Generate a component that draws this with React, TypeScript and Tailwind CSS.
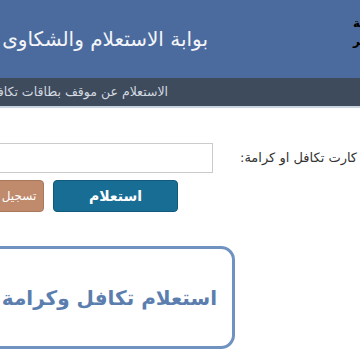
import React from 'react';

const App: React.FC = () => {
  return (
    <div
      dir="rtl"
      className="w-[360px] h-[360px] overflow-hidden bg-white"
      style={{ fontFamily: '"DejaVu Sans", "Noto Sans", sans-serif' }}
    >
      {/* Header */}
      <div className="h-[78px] bg-[#4b6b9e] flex items-center">
        <div className="w-[60px] shrink-0 -mr-[53px] self-start pt-[14px] text-left text-[12px] font-bold text-black leading-[18px]">
          <div className="whitespace-nowrap">الاجتماعية</div>
          <div className="whitespace-nowrap">مصر</div>
        </div>
        <span className="mr-[145px] shrink-0 whitespace-nowrap text-[20px] text-[#f3f5f9]">
          بوابة الاستعلام والشكاوى لبرنامج تكافل وكرامة
        </span>
      </div>

      {/* Sub bar */}
      <div className="h-[28px] bg-[#3e4b5c] flex items-center pr-[192px]">
        <span className="shrink-0 whitespace-nowrap text-[12.5px] text-[#d3d9e0]">
          الاستعلام عن موقف بطاقات تكافل وكرامة
        </span>
      </div>
      <div className="h-[2px] bg-[#c9d4de]" />

      {/* Form */}
      <div className="pt-[35px]">
        <div className="flex items-center h-[30px] gap-[27px]">
          <div className="w-[120px] shrink-0 flex justify-end overflow-hidden">
            <span className="shrink-0 whitespace-nowrap text-[13px] text-[#333]">
              ادخل رقم الطلب كارت تكافل او كرامة:
            </span>
          </div>
          <input
            type="text"
            className="w-[240px] h-[30px] shrink-0 border border-[#cbcbcb] bg-white outline-none"
          />
        </div>

        <div className="flex items-center h-[32px] mt-[7px] pr-[182px] gap-[9px]">
          <button className="w-[125px] h-[32px] shrink-0 rounded-[4px] bg-[#186d94] border border-[#125a7b] text-white text-[14px] font-bold">
            استعلام
          </button>
          <button className="w-[50px] h-[32px] shrink-0 rounded-[4px] bg-[#c08b6c] border border-[#a9775a] text-white text-[12px]">
            تسجيل
          </button>
        </div>
      </div>

      {/* Banner box */}
      <div className="mt-[34px] mr-[125px] w-[300px] h-[103px] shrink-0 border-[3px] border-[#6f92c1] rounded-[14px] flex items-center pr-[15px]">
        <span className="shrink-0 whitespace-nowrap text-[20px] font-bold text-[#5b7eaf]">
          استعلام تكافل وكرامة بالرقم القومي
        </span>
      </div>
    </div>
  );
};

export default App;
